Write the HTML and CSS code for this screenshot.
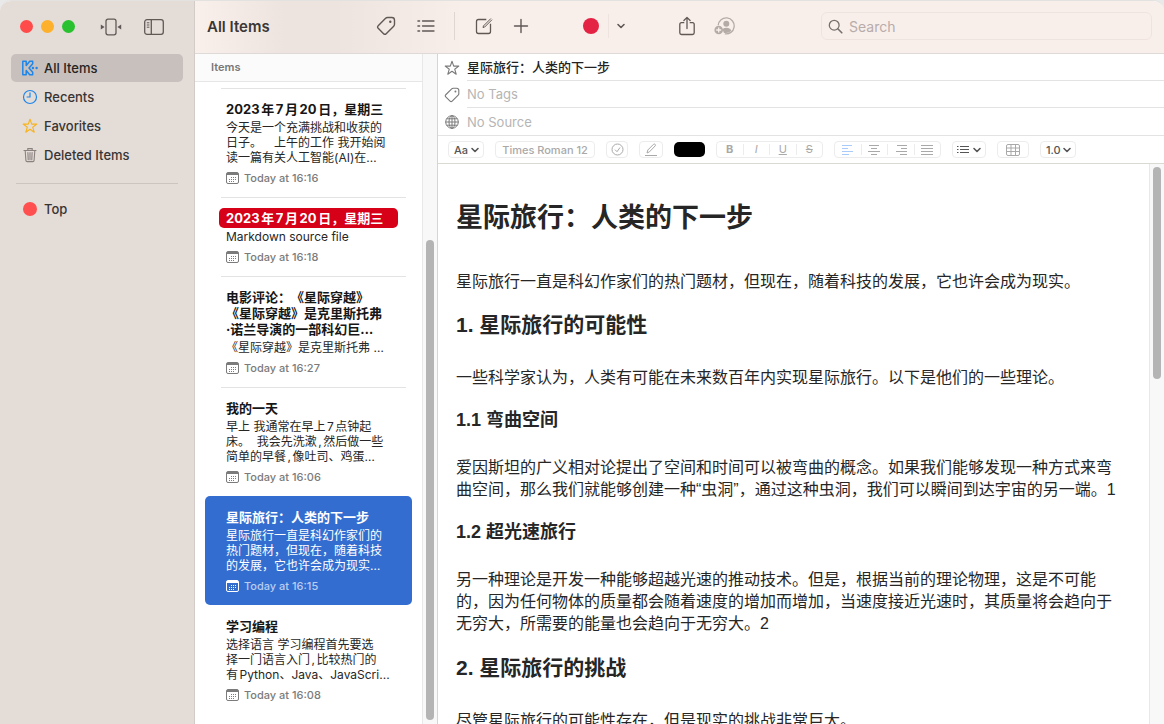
FILE: index.html
```html
<!DOCTYPE html>
<html lang="zh-CN">
  <head>
    <meta charset="UTF-8" />
    <meta name="viewport" content="width=device-width, initial-scale=1.0" />
    <link rel="stylesheet" href="styles.css">
    <title>All Items</title>
  </head>
  <body>
    <!-- shared icons -->
    <svg class="defs" aria-hidden="true">
      <symbol id="calendar" viewBox="0 0 14 13">
        <rect x=".5" y=".5" width="12" height="11" rx="1.500" fill="none" stroke="currentColor"/>
        <path d="M1 1h11v2H1z" fill="currentColor"/>
        <path d="M5 5.500h6M3 7.500h8M3 9.500h6" stroke="currentColor" stroke-dasharray="1 1"/>
      </symbol>
      <symbol id="tag" viewBox="0 0 20 20">
        <path d="M11.500 1.500h4.300q2.700 0 2.700 2.700v4.100q0 1.100-.8 1.900l-7.500 7.500q-1.300 1.300-2.600 0L2.200 12.300q-1.300-1.300 0-2.600l7.400-7.400q.8-.8 1.900-.8z" fill="none" stroke="currentColor" stroke-width="1.400"/>
        <circle cx="14.300" cy="5.700" r="1.200" fill="currentColor"/>
      </symbol>
      <symbol id="chevron" viewBox="0 0 10 10">
        <path d="M2 3.500l3 3 3-3" fill="none" stroke="currentColor" stroke-width="1.600" stroke-linecap="round" stroke-linejoin="round"/>
      </symbol>
      <symbol id="star" viewBox="0 0 16 16">
        <path d="M8 1.200l1.700 4.900h5.100l-4.100 3.100 1.500 5L8 11.200l-4.200 3 1.500-5-4.100-3.100h5.100z" fill="none" stroke="currentColor" stroke-width="1.100" stroke-linejoin="round"/>
      </symbol>
    </svg>

    <div class="window">
      <aside class="sidebar">
        <div class="windowControls">
          <button class="light close" aria-label="Close"></button>
          <button class="light minimize" aria-label="Minimize"></button>
          <button class="light zoom" aria-label="Zoom"></button>
          <button class="iconButton widen" aria-label="Widen">
            <svg width="22" height="18" viewBox="0 0 22 18"><rect x="6" y="1.200" width="10" height="15.600" rx="2" fill="none" stroke="currentColor" stroke-width="1.300"/><path d="M.8 6.500v5L4.600 9zM21.200 6.500v5L17.400 9z" fill="currentColor"/></svg>
          </button>
          <button class="iconButton toggle" aria-label="Toggle sidebar">
            <svg width="20" height="16" viewBox="0 0 20 16"><rect x=".7" y=".7" width="18.600" height="14.600" rx="2.300" fill="none" stroke="currentColor" stroke-width="1.300"/><path d="M7.300 1v14" stroke="currentColor" stroke-width="1.300"/><path d="M2.800 3.800h2.600M2.800 6h2.600M2.800 8.200h2.600" stroke="currentColor"/></svg>
          </button>
        </div>
        <nav class="nav">
          <a class="navItem active" href="#all">
            <svg class="blue" width="16" height="16" viewBox="0 0 16 16"><path d="M.8 1.200h3.400v4.200L7.700 1.200h3v2.600L7 8l3.700 4.200v2.600h-3L4.200 10.600v4.200H.8z" fill="none" stroke="currentColor" stroke-width="1.500" stroke-linejoin="round"/><circle cx="10.900" cy="8" r="1.200" fill="currentColor"/><circle cx="14.600" cy="8" r="1.200" fill="currentColor"/></svg>
            All Items
          </a>
          <a class="navItem" href="#recents">
            <svg class="blue" width="16" height="16" viewBox="0 0 16 16"><circle cx="8" cy="8" r="6.500" fill="none" stroke="currentColor" stroke-width="1.200"/><path d="M8 3.500V8H4.600" fill="none" stroke="currentColor" stroke-width="1.200"/></svg>
            Recents
          </a>
          <a class="navItem" href="#favorites">
            <svg class="gold" width="16" height="16"><use href="#star"/></svg>
            Favorites
          </a>
          <a class="navItem" href="#deleted">
            <svg class="grey" width="16" height="16" viewBox="0 0 16 16"><path d="M2 3.500h12M5.800 3.300V1.600h4.400v1.700M3.200 3.800l.7 9.600q.1 1.200 1.300 1.200h5.600q1.200 0 1.300-1.200l.7-9.600M5.900 5.500l.3 7.300M8 5.500v7.300M10.100 5.500l-.3 7.300" fill="none" stroke="currentColor" stroke-width="1.100" stroke-linecap="round"/></svg>
            Deleted Items
          </a>
        </nav>
        <hr class="navLine">
        <nav class="nav">
          <a class="navItem" href="#top"><span class="topDot"></span>Top</a>
        </nav>
      </aside>

      <main class="main">
        <header class="toolbar">
          <h1 class="windowTitle">All Items</h1>
          <div class="tools">
            <button class="iconButton" aria-label="Tags"><svg width="20" height="20"><use href="#tag"/></svg></button>
            <button class="iconButton" aria-label="View as list">
              <svg width="18" height="14" viewBox="0 0 18 14"><path d="M5.500 2H17M5.500 7H17M5.500 12H17" stroke="currentColor" stroke-width="1.300" stroke-linecap="round"/><path d="M1 2h1.500M1 7h1.500M1 12h1.500" stroke="currentColor" stroke-width="1.600" stroke-linecap="round"/></svg>
            </button>
            <span class="toolLine"></span>
          </div>
          <div class="tools edit">
            <button class="iconButton" aria-label="New note">
              <svg width="18" height="18" viewBox="0 0 18 18"><path d="M11.300 2.500H3.500q-2 0-2 2v10q0 2 2 2h10q2 0 2-2V6.800" fill="none" stroke="currentColor" stroke-width="1.300"/><path d="M8 10.500l.4-1.500 7.500-7.500M8 10.500l1.600-.4 7.400-7.400" fill="none" stroke="currentColor"/></svg>
            </button>
            <button class="iconButton" aria-label="Add"><svg width="16" height="16" viewBox="0 0 16 16"><path d="M8 1.500v13M1.500 8h13" stroke="currentColor" stroke-width="1.400" stroke-linecap="round"/></svg></button>
          </div>
          <div class="record">
            <button class="recordDot" aria-label="Red label"></button>
            <button class="iconButton recordMenu" aria-label="Choose label"><svg width="10" height="10"><use href="#chevron"/></svg></button>
          </div>
          <div class="tools edit">
            <button class="iconButton" aria-label="Share">
              <svg width="18" height="20" viewBox="0 0 18 20"><path d="M5.800 6.700H3.500q-1.700 0-1.700 1.700v8.400q0 1.700 1.700 1.700h11q1.700 0 1.700-1.700V8.400q0-1.700-1.700-1.700h-2.300M9 12.500V1.500M5.900 4.500L9 1.400l3.100 3.100" fill="none" stroke="currentColor" stroke-width="1.300" stroke-linecap="round" stroke-linejoin="round"/></svg>
            </button>
            <button class="iconButton faded" aria-label="Add people">
              <svg width="21" height="18" viewBox="0 0 21 18"><path d="M4.200 8.300a8 8 0 1 1 6.600 8.500" fill="none" stroke="currentColor" stroke-width="1.300"/><circle cx="12.300" cy="6.800" r="3" fill="currentColor"/><path d="M8.500 12q3.800-2.600 7.800 0l1 1.800q-2.800 2.900-7.500 2z" fill="currentColor"/><circle cx="4.700" cy="13" r="4.300" fill="currentColor"/><path d="M4.700 10.500v5M2.200 13h5" stroke="#f9efea" stroke-width="1.300"/></svg>
            </button>
          </div>
          <label class="search">
            <svg width="15" height="15" viewBox="0 0 15 15"><circle cx="6.200" cy="6.200" r="4.900" fill="none" stroke="currentColor" stroke-width="1.300"/><path d="M9.800 9.800l4 4" stroke="currentColor" stroke-width="1.600" stroke-linecap="round"/></svg>
            <input type="search" placeholder="Search" aria-label="Search">
          </label>
        </header>

        <div class="content">
          <section class="listPanel">
            <div class="listColumn">
              <h2 class="listHeader">Items</h2>
              <ul class="list">
                <li class="item"><div class="itemBody">
                  <h3 class="itemTitle">2023年7月20日，星期三</h3>
                  <p class="excerpt">今天是一个充满挑战和收获的<br>日子。&#12288;上午的工作 我开始阅<br>读一篇有关人工智能(AI)在…</p>
                  <p class="date"><svg width="14" height="13"><use href="#calendar"/></svg>Today at 16:16</p>
                </div></li>
                <li class="item"><div class="itemBody">
                  <h3 class="itemTitle red">2023年7月20日，星期三</h3>
                  <p class="excerpt">Markdown source file</p>
                  <p class="date"><svg width="14" height="13"><use href="#calendar"/></svg>Today at 16:18</p>
                </div></li>
                <li class="item"><div class="itemBody">
                  <h3 class="itemTitle">电影评论：《星际穿越》<br>《星际穿越》是克里斯托弗<br>·诺兰导演的一部科幻巨…</h3>
                  <p class="excerpt">《星际穿越》是克里斯托弗 …</p>
                  <p class="date"><svg width="14" height="13"><use href="#calendar"/></svg>Today at 16:27</p>
                </div></li>
                <li class="item"><div class="itemBody">
                  <h3 class="itemTitle">我的一天</h3>
                  <p class="excerpt">早上 我通常在早上7点钟起<br>床。&nbsp; 我会先洗漱,然后做一些<br>简单的早餐,像吐司、鸡蛋…</p>
                  <p class="date"><svg width="14" height="13"><use href="#calendar"/></svg>Today at 16:06</p>
                </div></li>
                <li class="item selected"><div class="itemBody">
                  <h3 class="itemTitle">星际旅行：人类的下一步</h3>
                  <p class="excerpt">星际旅行一直是科幻作家们的<br>热门题材，但现在，随着科技<br>的发展，它也许会成为现实…</p>
                  <p class="date"><svg width="14" height="13"><use href="#calendar"/></svg>Today at 16:15</p>
                </div></li>
                <li class="item plain"><div class="itemBody">
                  <h3 class="itemTitle">学习编程</h3>
                  <p class="excerpt">选择语言 学习编程首先要选<br>择一门语言入门,比较热门的<br>有Python、Java、JavaScri...</p>
                  <p class="date"><svg width="14" height="13"><use href="#calendar"/></svg>Today at 16:08</p>
                </div></li>
              </ul>
            </div>
            <div class="track listTrack"><div class="thumb"></div></div>
          </section>

          <section class="editor">
            <div class="field">
              <svg width="16" height="16"><use href="#star"/></svg>
              <input class="noteTitle" type="text" value="星际旅行：人类的下一步" aria-label="Title">
            </div>
            <div class="field">
              <svg width="16" height="16"><use href="#tag"/></svg>
              <input type="text" placeholder="No Tags" aria-label="Tags">
            </div>
            <div class="field last">
              <svg width="16" height="16" viewBox="0 0 16 16"><g fill="none" stroke="currentColor"><circle cx="8" cy="8" r="6.300"/><ellipse cx="8" cy="8" rx="3" ry="6.300"/><path d="M8 1.500v13M1.500 8h13M2.600 4.800h10.800M2.600 11.200h10.800"/></g></svg>
              <input type="text" placeholder="No Source" aria-label="Source">
            </div>

            <div class="formatBar">
              <label class="format strong picker">
                <select aria-label="Style"><option>Aa</option></select>
                <svg width="10" height="10"><use href="#chevron"/></svg>
              </label>
              <button class="format font">Times Roman 12</button>
              <button class="format check" aria-label="Checkbox"><svg width="13" height="13" viewBox="0 0 13 13"><circle cx="6.500" cy="6.500" r="5.500" fill="none" stroke="currentColor"/><path d="M4 6.700l2 2 3-4.200" fill="none" stroke="currentColor"/></svg></button>
              <button class="format pen" aria-label="Highlight"><svg width="14" height="14" viewBox="0 0 14 14"><path d="M1 12.500h12M3 10l.8-3L9.500 1.300q1-.6 1.700.1.600.7 0 1.500L5.500 8.800z" fill="none" stroke="currentColor"/></svg></button>
              <button class="swatch" aria-label="Text color"></button>
              <div class="format group">
                <button><b>B</b></button>
                <button><i>I</i></button>
                <button><u>U</u></button>
                <button><s>S</s></button>
              </div>
              <div class="format group">
                <button class="on" aria-label="Align left"><svg width="12" height="12" viewBox="0 0 12 12"><path d="M0 1.500h10M0 4.500h6M0 7.500h11M0 10.500h7" stroke="currentColor"/></svg></button>
                <button aria-label="Align center"><svg width="12" height="12" viewBox="0 0 12 12"><path d="M1 1.500h10M3 4.500h6M0 7.500h12M3 10.500h6" stroke="currentColor"/></svg></button>
                <button aria-label="Align right"><svg width="12" height="12" viewBox="0 0 12 12"><path d="M2 1.500h10M6 4.500h6M1 7.500h11M5 10.500h7" stroke="currentColor"/></svg></button>
                <button aria-label="Justify"><svg width="12" height="12" viewBox="0 0 12 12"><path d="M0 1.500h12M0 4.500h12M0 7.500h12M0 10.500h12" stroke="currentColor"/></svg></button>
              </div>
              <button class="format strong bullets" aria-label="List style">
                <svg width="12" height="12" viewBox="0 0 12 12"><path d="M3 2.500h9M3 5.500h9M3 8.500h9M0 2.500h1.500M0 5.500h1.500M0 8.500h1.500" stroke="currentColor"/></svg>
                <svg width="10" height="10"><use href="#chevron"/></svg>
              </button>
              <button class="format grid" aria-label="Table"><svg width="14" height="12" viewBox="0 0 14 12"><path d="M.5 2q0-1.500 1.500-1.500h10q1.500 0 1.500 1.500v8q0 1.500-1.500 1.500H2Q.5 11.500.5 10zM.5 4h13M.5 7.500h13M5 .5v11M9.500.5v11" fill="none" stroke="currentColor"/></svg></button>
              <label class="format strong picker">
                <select aria-label="Line spacing"><option>1.0</option></select>
                <svg width="10" height="10"><use href="#chevron"/></svg>
              </label>
            </div>

            <div class="page">
              <article class="article">
                <h1>星际旅行：人类的下一步</h1>
                <p>星际旅行一直是科幻作家们的热门题材，但现在，随着科技的发展，它也许会成为现实。</p>
                <h2>1. 星际旅行的可能性</h2>
                <p>一些科学家认为，人类有可能在未来数百年内实现星际旅行。以下是他们的一些理论。</p>
                <h3>1.1 弯曲空间</h3>
                <p>爱因斯坦的广义相对论提出了空间和时间可以被弯曲的概念。如果我们能够发现一种方式来弯<br>曲空间，那么我们就能够创建一种“虫洞”，通过这种虫洞，我们可以瞬间到达宇宙的另一端。1</p>
                <h3>1.2 超光速旅行</h3>
                <p>另一种理论是开发一种能够超越光速的推动技术。但是，根据当前的理论物理，这是不可能<br>的，因为任何物体的质量都会随着速度的增加而增加，当速度接近光速时，其质量将会趋向于<br>无穷大，所需要的能量也会趋向于无穷大。2</p>
                <h2>2. 星际旅行的挑战</h2>
                <p>尽管星际旅行的可能性存在，但是现实的挑战非常巨大。</p>
              </article>
              <div class="track pageTrack"><div class="thumb"></div></div>
            </div>
          </section>
        </div>
      </main>
    </div>
  </body>
</html>
```
FILE: styles.css
```css
* {
    box-sizing: border-box;
}

body {
    margin: 0;
    background: #e9e9e9;
    color: #262626;
    font-family: Inter, "Noto Sans CJK SC", sans-serif;
    font-size: 13px;
    text-spacing-trim: space-all;
    text-autospace: normal;
}

h1, h2, h3, p, ul {
    margin: 0;
    padding: 0;
}

button, input, select {
    margin: 0;
    padding: 0;
    border: none;
    outline: none;
    background: none;
    color: inherit;
    font: inherit;
}

svg {
    display: block;
    flex: none;
}

.defs {
    position: absolute;
    width: 0;
    height: 0;
}

.window {
    display: flex;
    height: 100vh;
    overflow: hidden;
    border-top: 1px solid #e4e2e1;
    border-radius: 11px 11px 0 0;
    background: #fff;
}

/* sidebar */
.sidebar {
    flex: none;
    width: 195px;
    background: #e4dcd7;
    border-right: 1px solid #d3cbc7;
}

.windowControls {
    display: flex;
    align-items: center;
    gap: 8px;
    height: 53px;
    padding: 0 20px 2px;
}

.light {
    width: 13px;
    height: 13px;
    border-radius: 50%;
}

.close { background: #ff4b49; }
.minimize { background: #fdb02b; }
.zoom { background: #2ac130; }

.iconButton {
    display: grid;
    place-items: center;
    width: 24px;
    height: 24px;
    color: #5f5855;
}

.widen {
    margin-left: 16px;
}

.toggle {
    margin-left: 11px;
}

.nav {
    padding: 0 11px;
}

.navItem {
    display: flex;
    align-items: center;
    gap: 6px;
    height: 28px;
    padding-left: 11px;
    border-radius: 5px;
    color: #383433;
    font-weight: 500;
    text-decoration: none;
}

.nav .navItem + .navItem {
    margin-top: 1px;
}

.active {
    background: #c8c0bc;
    color: #262322;
}

.blue { color: #1e86ea; }
.gold { color: #f8b31d; }
.grey { color: #88817e; }

.navLine {
    margin: 14px 16px 11px;
    border: none;
    border-top: 1px solid #ccc4bf;
}

.topDot {
    width: 14px;
    height: 14px;
    margin: 0 1px;
    border-radius: 50%;
    background: #ff4f4f;
}

/* toolbar */
.main {
    display: flex;
    flex: 1;
    flex-direction: column;
    min-width: 0;
}

.toolbar {
    display: flex;
    flex: none;
    align-items: center;
    height: 53px;
    padding: 0 12px 2px;
    border-bottom: 1px solid #dedad8;
    background: linear-gradient(90deg, #faf0eb, #ede4df 90px, #ede4df 140px, #f9efea 270px);
}

.windowTitle {
    width: 167px;
    color: #3b3735;
    font-size: 15px;
    font-weight: 600;
}

.tools {
    display: flex;
    align-items: center;
    gap: 16px;
}

.toolLine {
    width: 1px;
    height: 28px;
    background: #dfd6d2;
}

.edit {
    gap: 13px;
    margin-left: 17px;
}

.record {
    display: flex;
    align-items: center;
    margin: 0 26px 0 50px;
}

.recordDot {
    width: 16px;
    height: 16px;
    border-radius: 50%;
    background: #e42243;
}

.recordMenu {
    margin-left: 9px;
    border-left: 1px solid #eee3df;
}

.faded {
    color: #b4aba7;
}

.search {
    display: flex;
    flex: 1;
    align-items: center;
    gap: 6px;
    height: 28px;
    margin-left: 85px;
    padding: 0 6px;
    border: 1px solid #efe3de;
    border-radius: 6px;
    color: #76706d;
}

.search input {
    flex: 1;
    min-width: 0;
    font-size: 14px;
}

::placeholder {
    color: #b5b5b5;
    opacity: 1;
}

.search ::placeholder {
    color: #b7acaa;
}

.content {
    display: flex;
    flex: 1;
    min-height: 0;
}

/* list of notes */
.listPanel {
    display: flex;
    flex: none;
    width: 243px;
    border-right: 1px solid #d6d5d0;
}

.listColumn {
    flex: 1;
    overflow: hidden;
}

.listHeader {
    height: 28px;
    margin-bottom: 6px;
    padding-left: 16px;
    border-bottom: 1px solid #e6e6e6;
    background: #fcfbfb;
    color: #777;
    font-size: 11px;
    font-weight: 600;
    line-height: 27px;
}

.list {
    list-style: none;
}

.item {
    margin: 0 10px;
    padding: 0 6px 0 16px;
    border-radius: 5px;
}

.itemBody {
    padding: 12px 0 11px 5px;
    border-top: 1px solid #e3e3e3;
    white-space: nowrap;
}

.itemTitle {
    color: #161616;
    font-size: 13px;
    font-weight: 700;
    line-height: 16px;
}

.red {
    margin: -2px 8px -2px -7px;
    padding: 2px 7px;
    border-radius: 5px;
    background: #d60018;
    color: #fff;
}

.excerpt {
    margin: 3px 0 5px;
    font-size: 12px;
    line-height: 15px;
}

.date {
    display: flex;
    align-items: center;
    gap: 4px;
    color: #7b7b7b;
    font-size: 11px;
    font-weight: 500;
    line-height: 16px;
}

.selected {
    background: #346dd0;
    color: #fff;
}

.selected .itemTitle {
    color: #fff;
}

.selected .date {
    color: #b9cdf0;
}

.selected .date svg {
    color: #fff;
}

.selected .itemBody,
.plain .itemBody {
    border-color: transparent;
}

.track {
    flex: none;
    width: 15px;
    border-left: 1px solid #e8e8e8;
    background: #f8f8f8;
}

.thumb {
    width: 8px;
    margin: 0 auto;
    border-radius: 4px;
    background: #b4b4b4;
}

.listTrack {
    display: flex;
    align-items: flex-end;
    padding-bottom: 4px;
}

.listTrack .thumb {
    height: 72%;
}

.pageTrack {
    padding-top: 3px;
}

.pageTrack .thumb {
    height: 38%;
}

/* editor */
.editor {
    display: flex;
    flex: 1;
    flex-direction: column;
    min-width: 0;
}

.field {
    display: flex;
    flex: none;
    align-items: center;
    gap: 7px;
    height: 27px;
    padding-left: 6px;
    color: #7a7a7a;
}

.field input {
    flex: 1;
    min-width: 0;
    height: 27px;
    border-bottom: 1px solid #e3e3e3;
}

.field .noteTitle {
    padding-bottom: 2px;
    color: #222;
    font-weight: 500;
}

.last {
    height: 28px;
    border-bottom: 1px solid #e3e3e3;
}

.last input {
    border: none;
}

.formatBar {
    display: flex;
    flex: none;
    align-items: center;
    gap: 11px;
    height: 28px;
    padding-left: 10px;
    border-bottom: 1px solid #dadad3;
}

.format {
    display: flex;
    align-items: center;
    justify-content: center;
    height: 17px;
    border: 1px solid #ececec;
    border-radius: 4px;
    color: #a9a9a9;
    font-size: 11px;
}

.strong {
    color: #555;
    font-weight: 500;
}

.picker {
    position: relative;
    width: 36px;
}

.picker select {
    width: 100%;
    height: 15px;
    padding-left: 5px;
    appearance: none;
}

.picker svg {
    position: absolute;
    right: 3px;
    pointer-events: none;
}

.font {
    width: 100px;
    font-weight: 500;
}

.check {
    width: 22px;
}

.pen {
    width: 24px;
}

.swatch {
    width: 31px;
    height: 15px;
    border-radius: 5px;
    background: #000;
}

.group {
    width: 107px;
}

.group button {
    display: grid;
    flex: 1;
    place-items: center;
    height: 11px;
    line-height: 11px;
}

.group button + button {
    border-left: 1px solid #ececec;
}

.format .on {
    color: #a9cbfa;
}

.bullets {
    gap: 3px;
    width: 34px;
}

.grid {
    width: 32px;
}

.page {
    display: flex;
    flex: 1;
    min-height: 0;
}

.article {
    flex: 1;
    min-width: 0;
    overflow: hidden;
    padding: 34px 18px 0;
    font-family: "Liberation Sans", "Noto Sans CJK SC", sans-serif;
    font-size: 16px;
    line-height: 22px;
    white-space: nowrap;
}

.article h1 {
    font-size: 27px;
    line-height: 40px;
}

.article h2 {
    font-size: 21px;
    line-height: 30px;
}

.article h3 {
    font-size: 18px;
    line-height: 26px;
}

.article h1 + p {
    margin: 33px 0 17px;
}

.article h2 + p {
    margin: 27px 0 18px;
}

.article h3 + p {
    margin: 24px 0 18px;
}
```
